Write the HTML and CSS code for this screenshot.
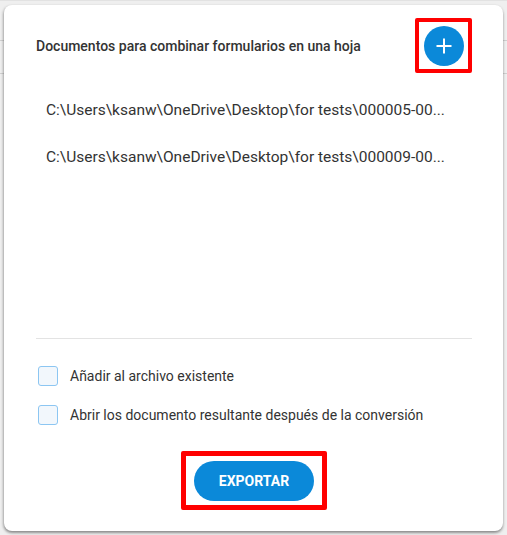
FILE: index.html
```html
<!DOCTYPE html>
<html lang="es">
  <head>
    <meta charset="UTF-8" />
    <meta name="viewport" content="width=device-width, initial-scale=1.0" />
    <title>Combinar formularios</title>
    <link rel="stylesheet" href="styles.css">
  </head>
  <body>
    <div class="backdrop">
      <div class="backdrop-row"></div>
      <div class="backdrop-row"></div>
    </div>

    <div class="dialog">
      <div class="dialog-header">
        <span class="dialog-title">Documentos para combinar formularios en una hoja</span>
        <div class="highlight highlight-add">
          <button class="add-button" title="Añadir">
            <svg width="18" height="18" viewBox="0 0 18 18">
              <path d="M9 1.5v15M1.5 9h15" stroke="#fff" stroke-width="2" fill="none" />
            </svg>
          </button>
        </div>
      </div>

      <ul class="file-list">
        <li class="file-item">C:\Users\ksanw\OneDrive\Desktop\for tests\000005-00...</li>
        <li class="file-item">C:\Users\ksanw\OneDrive\Desktop\for tests\000009-00...</li>
      </ul>

      <div class="divider"></div>

      <div class="options">
        <label class="option">
          <span class="checkbox"></span>
          Añadir al archivo existente
        </label>
        <label class="option">
          <span class="checkbox"></span>
          Abrir los documento resultante después de la conversión
        </label>
      </div>

      <div class="actions">
        <div class="highlight highlight-export">
          <button class="export-button">EXPORTAR</button>
        </div>
      </div>
    </div>
  </body>
</html>
```

FILE: styles.css
```css
body {
  margin: 0;
  font-family: Roboto, "Noto Sans", sans-serif;
  background-color: #efefef;
  height: 535px;
  overflow: hidden;
}
.backdrop {
  padding-top: 3px;
  border-top: 1px solid #e2e2e2;
}
.backdrop-row {
  height: 32px;
  border-bottom: 1px solid #d0d0d0;
}
.backdrop-row:first-child {
  height: 36px;
}

/* modal over the page */
.dialog {
  position: absolute;
  left: 4px;
  top: 5px;
  width: 499px;
  height: 526px;
  box-sizing: border-box;
  padding: 13px 31px 21px 32px;
  background-color: white;
  border-radius: 8px;
  box-shadow: 0 2px 3px rgba(0, 0, 0, 0.35), -1px 1px 3px rgba(0, 0, 0, 0.15);
  display: flex;
  flex-direction: column;
}
.dialog-header {
  display: flex;
  align-items: center;
  justify-content: space-between;
  height: 55px;
}
.dialog-title {
  font-size: 14px;
  font-weight: 500;
  color: #333;
}
.highlight {
  border: 4px solid #ff0000;
  border-radius: 2px;
  box-sizing: border-box;
  display: flex;
  align-items: center;
  justify-content: center;
}
.highlight-add {
  width: 57px;
  height: 55px;
}
.add-button {
  width: 40px;
  height: 40px;
  border: none;
  border-radius: 50%;
  background-color: #0b89d9;
  padding: 0;
  display: flex;
  align-items: center;
  justify-content: center;
  cursor: pointer;
}
.file-list {
  list-style: none;
  margin: 13px 0 0;
  padding: 0;
  flex: 1;
}
.file-item {
  height: 47px;
  line-height: 48px;
  padding-left: 10px;
  font-size: 15.5px;
  color: #333;
  white-space: nowrap;
}
.divider {
  height: 1px;
  background-color: #e3e3e3;
}
.options {
  padding-top: 17px;
}
.option {
  display: flex;
  align-items: center;
  gap: 12px;
  height: 39px;
  padding-left: 2px;
  font-size: 14px;
  color: #333;
}
.checkbox {
  width: 18px;
  height: 18px;
  border: 1px solid #8cc6f2;
  border-radius: 3px;
  background-color: #f2f7fc;
}
.actions {
  display: flex;
  justify-content: center;
  margin-top: 17px;
}
.highlight-export {
  border-width: 5px;
  width: 146px;
  height: 59px;
}
.export-button {
  width: 120px;
  height: 40px;
  border: none;
  border-radius: 20px;
  background-color: #0b89d9;
  color: white;
  font-family: Roboto, "Noto Sans", sans-serif;
  font-size: 14px;
  font-weight: bold;
  cursor: pointer;
}
```
